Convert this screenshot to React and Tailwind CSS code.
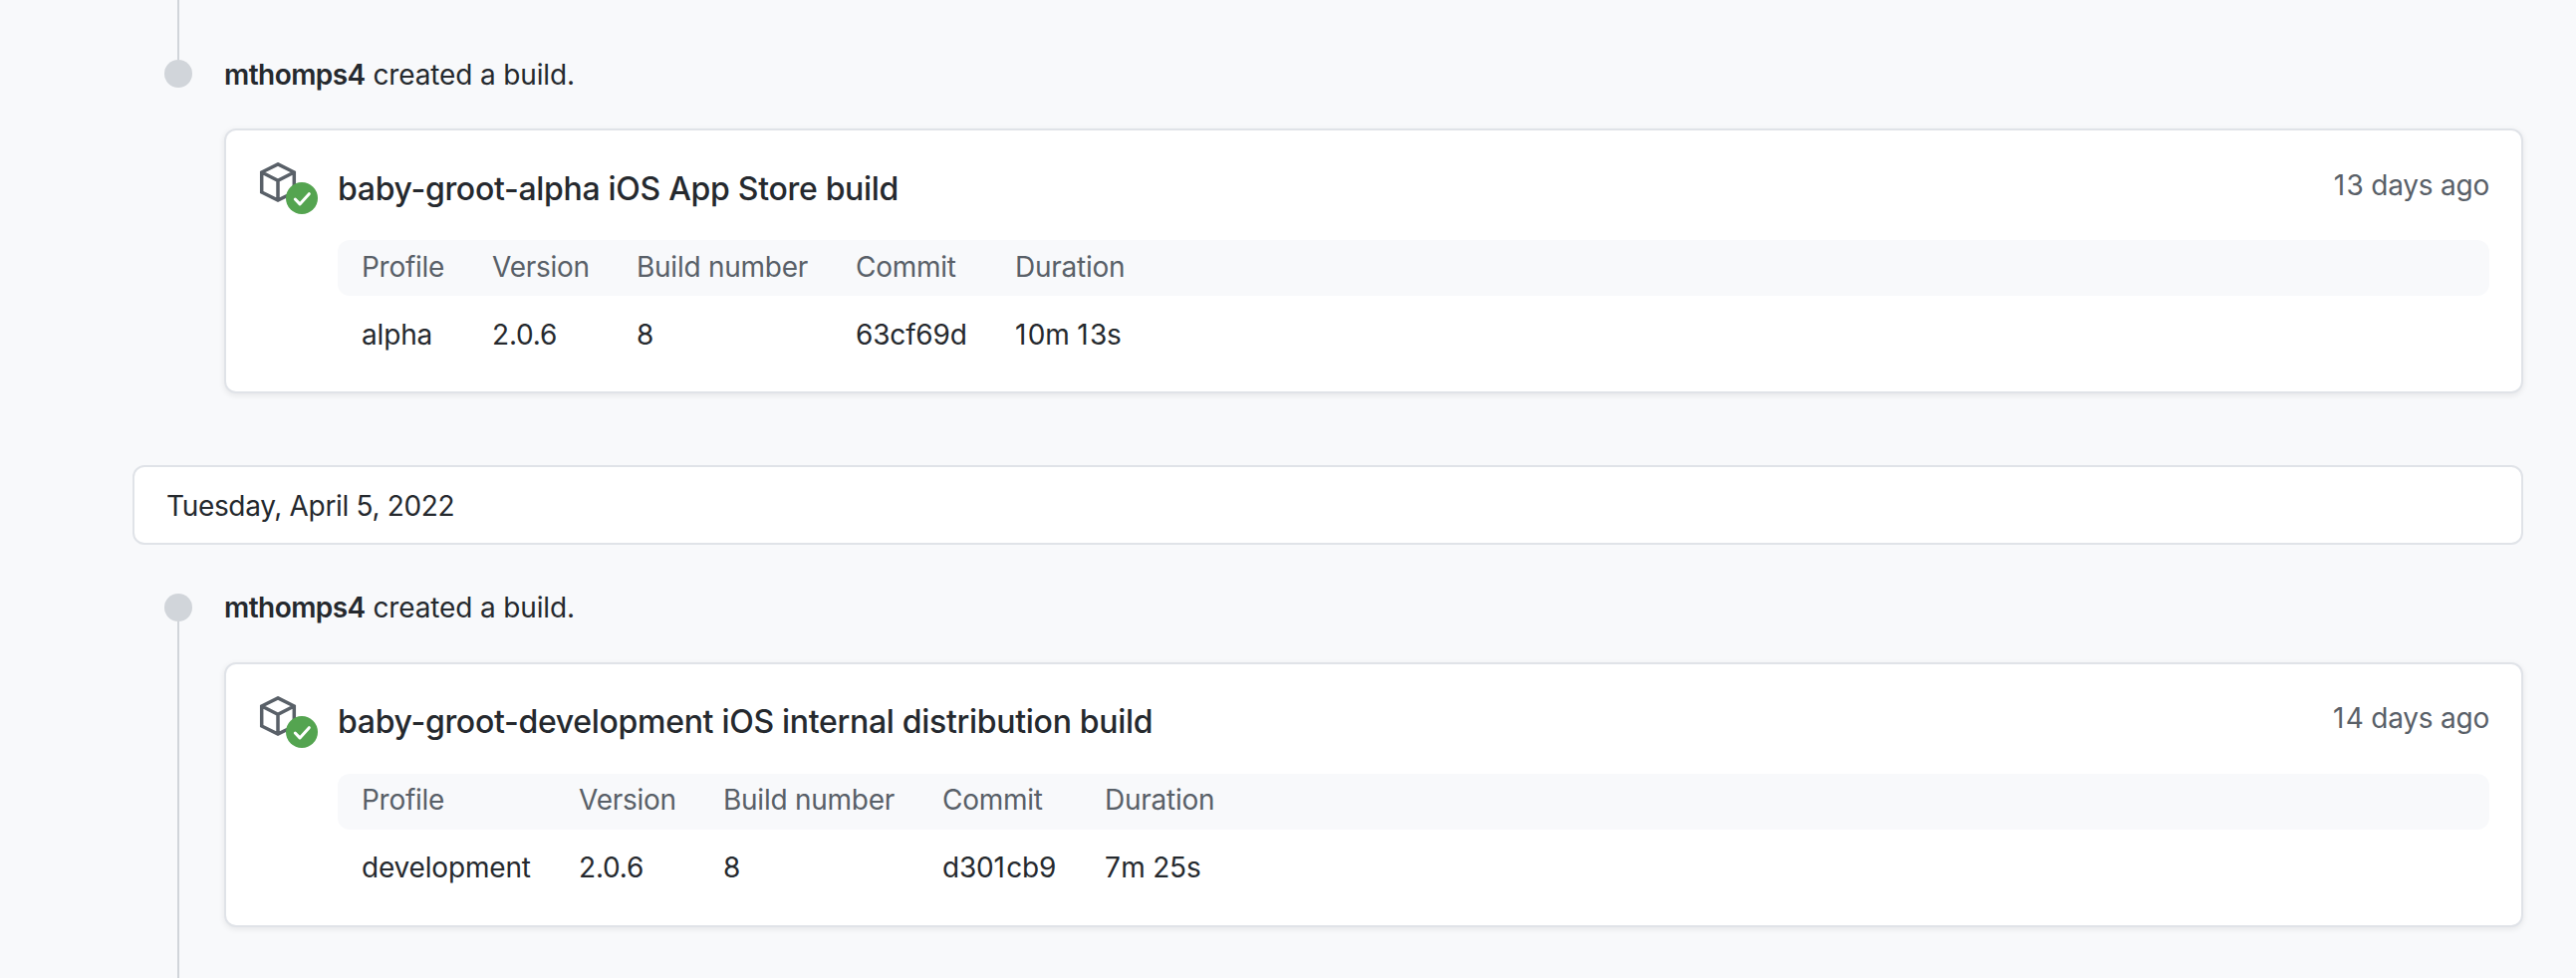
const builds = [
  {
    title: "baby-groot-alpha iOS App Store build",
    age: "13 days ago",
    fields: [["Profile", "alpha"], ["Version", "2.0.6"], ["Build number", "8"], ["Commit", "63cf69d"], ["Duration", "10m 13s"]],
    columns: "grid-cols-[131px_145px_220px_160px_160px_1fr]",
    nudge: "",
  },
  {
    title: "baby-groot-development iOS internal distribution build",
    age: "14 days ago",
    fields: [["Profile", "development"], ["Version", "2.0.6"], ["Build number", "8"], ["Commit", "d301cb9"], ["Duration", "7m 25s"]],
    columns: "grid-cols-[218px_145px_220px_163px_160px_1fr]",
    nudge: "-translate-y-px",
  },
];

function Digits({ text }) {
  return text.split(/([17])/).map((part, i) => (
    <span key={i} className={part === "1" ? "tracking-[1.3px]" : part === "7" ? "tracking-[0.3px]" : undefined}>{part}</span>
  ));
}

function BuildIcon() {
  return (
    <svg className="h-[52px] w-[60px] shrink-0" viewBox="0 0 60 52" fill="none">
      <path d="M20 1.9 36.3 10v20L20 38.1 3.7 30V10L20 1.9Z M3.7 10 20 18.2 36.3 10 M20 18.2V38" stroke="#596068" strokeWidth="3.5" />
      <circle cx="44" cy="36" r="16" fill="#54a450" />
      <path d="m37.3 37 4.7 4.9 9.3-10.2" stroke="#fff" strokeWidth="3" strokeLinecap="round" strokeLinejoin="round" />
    </svg>
  );
}

function BuildEvent({ build }) {
  return (
    <div className="min-w-0 flex-1">
      <p className={`leading-8 tracking-[-0.14px] ${build.nudge}`}>
        <span className="font-semibold tracking-[-0.55px]">mthomps4</span> created a build.
      </p>
      <div className="mt-[38px] flex h-[266px] rounded-xl border-2 border-[#e0e3e8] bg-white p-8 shadow-[0_2px_6px_rgba(0,0,0,0.08)]">
        <BuildIcon />
        <div className="ml-5 min-w-0 flex-1">
          <div className="flex h-[78px] items-start justify-between">
            <h2 className={`text-[32px] leading-[54px] font-medium tracking-[-0.3px] ${build.nudge}`}>{build.title}</h2>
            <span className={`leading-[46px] tracking-[-0.22px] text-[#596068] ${build.nudge}`}><Digits text={build.age} /></span>
          </div>
          <div className={`grid ${build.columns}`}>
            {build.fields.map(([name]) => (
              <div key={name} className="h-14 bg-[#f8f9fb] px-6 leading-[54px] tracking-[-0.26px] whitespace-nowrap text-[#596068] first:rounded-l-xl">
                <div className={build.nudge}>{name}</div>
              </div>
            ))}
            <div className="rounded-r-xl bg-[#f8f9fb]" />
            {build.fields.map(([name, value]) => (
              <div key={name} className="px-6 pt-[23px] leading-8 tracking-[-0.17px] whitespace-nowrap">
                <div className={build.nudge}><Digits text={value} /></div>
              </div>
            ))}
          </div>
        </div>
      </div>
    </div>
  );
}

export default function App() {
  return (
    <main className="flex h-[982px] w-full flex-col overflow-hidden bg-[#f8f9fb] pr-[53px] pl-[133px] font-['Inter',sans-serif] text-[28px] text-[#25292e]">
      <section className="flex gap-8 pl-8">
        <div className="flex w-7 flex-col items-center">
          <div className="h-[60px] w-0.5 bg-[#d1d5da]" />
          <div className="size-7 rounded-full bg-[#d1d5da]" />
        </div>
        <div className="flex flex-1 pt-[59px]">
          <BuildEvent build={builds[0]} />
        </div>
      </section>
      <div className="mt-[72px] h-20 shrink-0 rounded-xl border-2 border-[#e0e3e8] bg-white px-8 leading-[78px] tracking-[-0.33px]">Tuesday, April 5, 2022</div>
      <section className="mt-12 flex flex-1 gap-8 pl-8">
        <div className="flex w-7 flex-col items-center pt-px">
          <div className="size-7 shrink-0 rounded-full bg-[#d1d5da]" />
          <div className="w-0.5 flex-1 bg-[#d1d5da]" />
        </div>
        <BuildEvent build={builds[1]} />
      </section>
    </main>
  );
}
